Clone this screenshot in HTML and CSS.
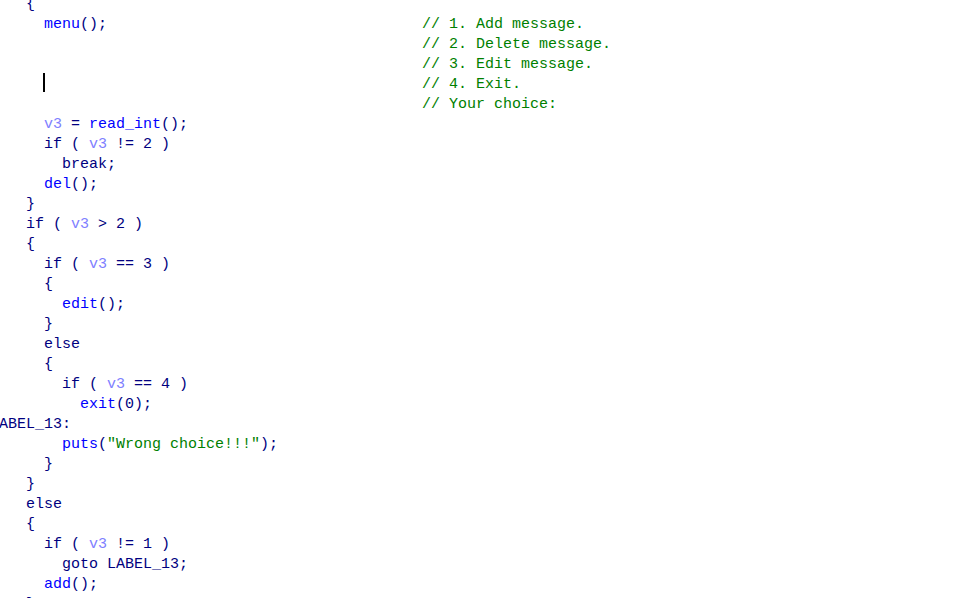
FILE: index.html
```html
<!DOCTYPE html>
<html>
<head>
<meta charset="utf-8">
<link rel="stylesheet" href="styles.css">
</head>
<body>
<pre class="code"><span class="p">    {</span>
<span class="f">      menu</span><span class="p">();</span>                                   <span class="c">// 1. Add message.</span>
                                                <span class="c">// 2. Delete message.</span>
                                                <span class="c">// 3. Edit message.</span>
      <span class="cursor"></span>                                          <span class="c">// 4. Exit.</span>
                                                <span class="c">// Your choice:</span>
      <span class="v">v3</span><span class="p"> = </span><span class="f">read_int</span><span class="p">();</span>
      <span class="k">if</span><span class="p"> ( </span><span class="v">v3</span><span class="p"> != 2 )</span>
        <span class="k">break</span><span class="p">;</span>
      <span class="f">del</span><span class="p">();</span>
<span class="p">    }</span>
    <span class="k">if</span><span class="p"> ( </span><span class="v">v3</span><span class="p"> &gt; 2 )</span>
<span class="p">    {</span>
      <span class="k">if</span><span class="p"> ( </span><span class="v">v3</span><span class="p"> == 3 )</span>
<span class="p">      {</span>
        <span class="f">edit</span><span class="p">();</span>
<span class="p">      }</span>
      <span class="k">else</span>
<span class="p">      {</span>
        <span class="k">if</span><span class="p"> ( </span><span class="v">v3</span><span class="p"> == 4 )</span>
          <span class="f">exit</span><span class="p">(0);</span>
<span class="l">LABEL_13:</span>
        <span class="f">puts</span><span class="p">(</span><span class="s">"Wrong choice!!!"</span><span class="p">);</span>
<span class="p">      }</span>
<span class="p">    }</span>
    <span class="k">else</span>
<span class="p">    {</span>
      <span class="k">if</span><span class="p"> ( </span><span class="v">v3</span><span class="p"> != 1 )</span>
        <span class="k">goto</span><span class="l"> LABEL_13</span><span class="p">;</span>
      <span class="f">add</span><span class="p">();</span>
<span class="p">    }</span></pre>
</body>
</html>
```
FILE: styles.css
```css
html, body {
  margin: 0;
  padding: 0;
  background: #ffffff;
  overflow: hidden;
}
.code {
  margin: -5px 0 0 -10px;
  font-family: "Liberation Mono", "DejaVu Sans Mono", monospace;
  font-size: 15px;
  line-height: 20px;
  color: #000080;
  white-space: pre;
}
.p { color: #000080; }
.k { color: #000080; }
.l { color: #000080; }
.f { color: #0000ff; }
.v { color: #8080ff; }
.s { color: #008000; }
.c { color: #008000; }
.cursor {
  display: inline-block;
  width: 2px;
  height: 19px;
  margin-left: -1px;
  margin-right: -1px;
  background: #000000;
  vertical-align: top;
  transform: translateY(-2px);
}
```
